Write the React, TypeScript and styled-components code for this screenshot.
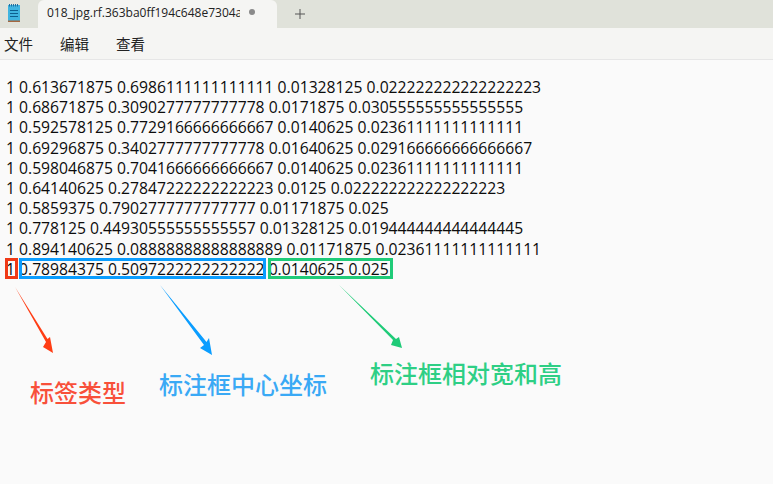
import React from "react";
import styled, { createGlobalStyle } from "styled-components";

const Global = createGlobalStyle`
  html, body { margin: 0; padding: 0; background: #fafafa; }
  #root { width: 773px; height: 484px; overflow: hidden; }
`;
const Page = styled.div`
  position: relative;
  width: 773px;
  height: 484px;
  overflow: hidden;
  background: #fafafa;
  font-family: "Open Sans", "Noto Sans CJK SC", sans-serif;
  color: #0c0c0c;
`;
const TabBar = styled.div`
  display: flex;
  align-items: flex-end;
  height: 28px;
  background: #e0e2da;
`;
const AppIcon = styled.div`
  display: flex;
  width: 38px;
  height: 28px;
  padding: 3px 0 0 7px;
  box-sizing: border-box;
`;
const Tab = styled.div`
  display: flex;
  align-items: center;
  width: 239px;
  height: 28px;
  box-sizing: border-box;
  padding: 0 0 4px 9px;
  background: #f5f5f3;
  border-radius: 6px 6px 0 0;
  font-size: 12px;
`;
const TabTitle = styled.span`
  width: 193px;
  overflow: hidden;
  white-space: nowrap;
  color: #222;
`;
const Dot = styled.span`
  width: 6px;
  height: 6px;
  margin-left: 9px;
  border-radius: 50%;
  background: #8a8a8a;
`;
const Plus = styled.div`
  display: flex;
  margin: 0 0 8px 17px;
`;
const MenuBar = styled.div`
  display: flex;
  gap: 27px;
  align-items: center;
  height: 32px;
  padding: 0 0 1px 4px;
  box-sizing: border-box;
  background: #f5f5f3;
  border-bottom: 1px solid #e6e6e6;
  font-size: 14.5px;
  font-family: "Noto Sans CJK SC", sans-serif;
  color: #222;
`;
const Editor = styled.div`
  padding: 17px 0 0 6px;
  font-size: 15.7px;
  line-height: 20.2px;
  white-space: nowrap;
`;
const Line = styled.div`
  height: 20.2px;
`;
const Box = styled.div<{ $c: string; $x: number; $w: number }>`
  position: absolute;
  top: 258px;
  left: ${p => p.$x}px;
  width: ${p => p.$w}px;
  height: 21px;
  box-sizing: border-box;
  border: 3px solid ${p => p.$c};
`;
const Label = styled.div<{ $c: string; $x: number; $y: number; $s: number }>`
  position: absolute;
  left: ${p => p.$x}px;
  top: ${p => p.$y}px;
  font-family: "Noto Sans CJK SC", sans-serif;
  font-size: ${p => p.$s}px;
  font-weight: 500;
  line-height: 1;
  white-space: nowrap;
  color: ${p => p.$c};
`;
const Overlay = styled.svg`
  position: absolute;
  left: 0;
  top: 0;
`;

const lines = [
  "1 0.613671875 0.6986111111111111 0.01328125 0.022222222222222223",
  "1 0.68671875 0.3090277777777778 0.0171875 0.030555555555555555",
  "1 0.592578125 0.7729166666666667 0.0140625 0.02361111111111111",
  "1 0.69296875 0.3402777777777778 0.01640625 0.029166666666666667",
  "1 0.598046875 0.7041666666666667 0.0140625 0.02361111111111111",
  "1 0.64140625 0.27847222222222223 0.0125 0.022222222222222223",
  "1 0.5859375 0.7902777777777777 0.01171875 0.025",
  "1 0.778125 0.44930555555555557 0.01328125 0.019444444444444445",
  "1 0.894140625 0.08888888888888889 0.01171875 0.02361111111111111",
  "1 0.78984375 0.5097222222222222 0.0140625 0.025",
];

export default function App() {
  return (
    <Page>
      <Global />
      <TabBar>
        <AppIcon>
          <svg width="14" height="20" viewBox="0 0 14 20">
            <rect x="1" y="2" width="12" height="16" fill="#3fb4e0" />
            <rect x="1" y="17.5" width="12" height="1.5" fill="#a5673f" />
            <path d="M2.5 1v2.5M4.5 1v2.5M6.5 1v2.5M8.5 1v2.5M10.5 1v2.5" stroke="#1f6fa0" strokeWidth="1" />
            <path d="M3 7.5h8M3 10.5h8M3 13.5h8" stroke="#0d5f8f" strokeWidth="1" />
          </svg>
        </AppIcon>
        <Tab>
          <TabTitle>018_jpg.rf.363ba0ff194c648e7304a7</TabTitle>
          <Dot />
        </Tab>
        <Plus>
          <svg width="12" height="12" viewBox="0 0 12 12">
            <path d="M6 1v10M1 6h10" stroke="#555" strokeWidth="1" />
          </svg>
        </Plus>
      </TabBar>
      <MenuBar>
        <span>文件</span>
        <span>编辑</span>
        <span>查看</span>
      </MenuBar>
      <Editor>
        {lines.map(l => (
          <Line key={l}>{l}</Line>
        ))}
      </Editor>
      <Box $c="#f03a17" $x={5} $w={13} />
      <Box $c="#0a9dff" $x={19} $w={247} />
      <Box $c="#1fcb78" $x={268} $w={125} />
      <Overlay width="773" height="484" viewBox="0 0 773 484">
        <path d="M15 287L46 342L43 347L53 353L50 337L47.5 339Z" fill="#ff3d14" />
        <path d="M160 285L204 345L200 348L212 355L209 338L206.5 342Z" fill="#0a9dff" />
        <path d="M339 285L393 340L391 345L402 348L399 337L396 339Z" fill="#1fcb78" />
      </Overlay>
      <Label $c="#f8503a" $x={30} $y={380} $s={24}>标签类型</Label>
      <Label $c="#3aa9f5" $x={159} $y={372} $s={24}>标注框中心坐标</Label>
      <Label $c="#2ecf85" $x={370} $y={361} $s={24}>标注框相对宽和高</Label>
    </Page>
  );
}
